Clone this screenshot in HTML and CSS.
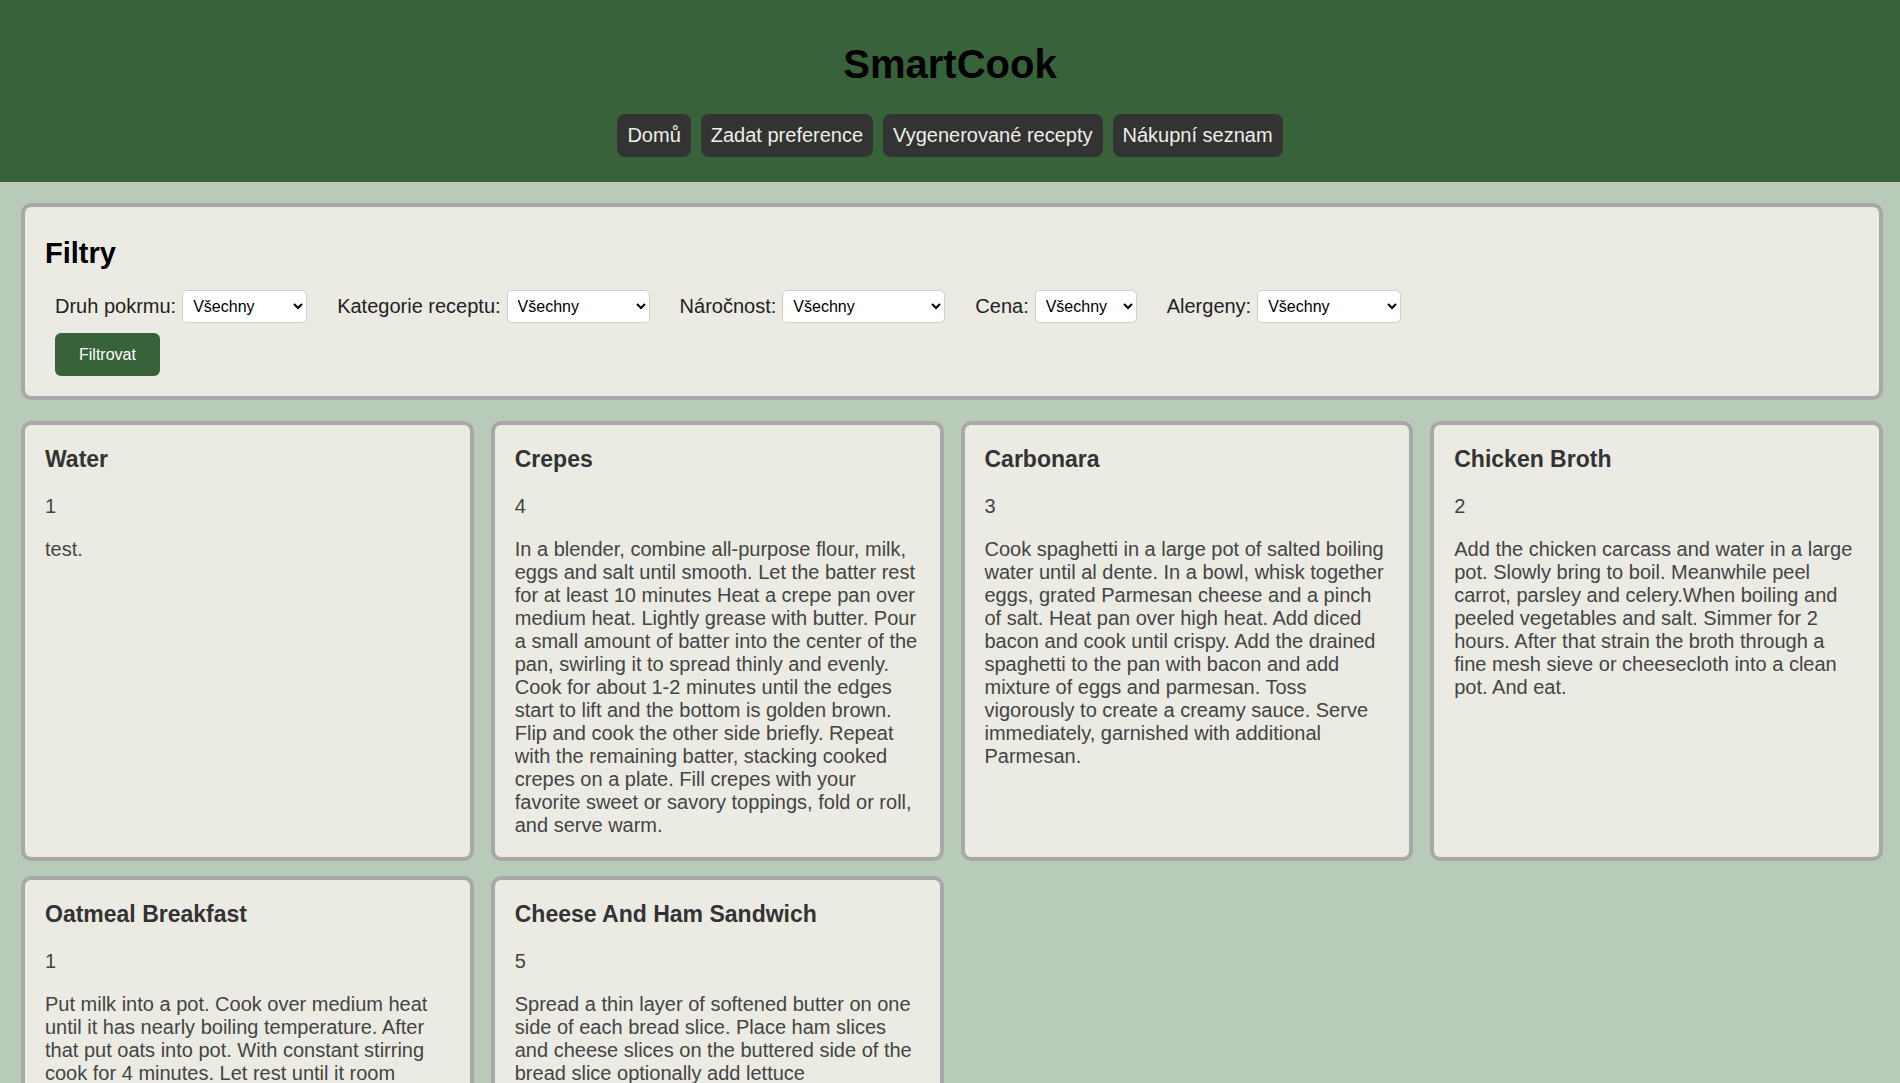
FILE: index.html
```html
<!DOCTYPE html>
<html lang="cs">
<head>
<meta charset="utf-8">
<title>SmartCook</title>
<link rel="stylesheet" href="styles.css">
</head>
<body>
<header class="site-header">
  <h1 class="brand">SmartCook</h1>
  <nav class="nav">
    <a class="nav-btn" href="#">Domů</a>
    <a class="nav-btn" href="#">Zadat preference</a>
    <a class="nav-btn" href="#">Vygenerované recepty</a>
    <a class="nav-btn" href="#">Nákupní seznam</a>
  </nav>
</header>
<main class="main">
  <section class="filters">
    <h2 class="filters-title">Filtry</h2>
    <form class="filter-form">
      <div class="filter-row">
        <label class="filter-group"><span class="filter-label">Druh pokrmu:</span>
          <select class="sel sel-druh"><option>Všechny</option></select></label>
        <label class="filter-group"><span class="filter-label">Kategorie receptu:</span>
          <select class="sel sel-kat"><option>Všechny</option></select></label>
        <label class="filter-group"><span class="filter-label">Náročnost:</span>
          <select class="sel sel-nar"><option>Všechny</option></select></label>
        <label class="filter-group"><span class="filter-label">Cena:</span>
          <select class="sel sel-cena"><option>Všechny</option></select></label>
        <label class="filter-group"><span class="filter-label">Alergeny:</span>
          <select class="sel sel-alg"><option>Všechny</option></select></label>
      </div>
      <button type="button" class="filter-btn">Filtrovat</button>
    </form>
  </section>
  <section class="cards">
    <article class="card">
      <h3 class="card-title">Water</h3>
      <p class="card-num">1</p>
      <p class="card-text">test.</p>
    </article>
    <article class="card">
      <h3 class="card-title">Crepes</h3>
      <p class="card-num">4</p>
      <p class="card-text">In a blender, combine all-purpose flour, milk, eggs and salt until smooth. Let the batter rest for at least 10 minutes Heat a crepe pan over medium heat. Lightly grease with butter. Pour a small amount of batter into the center of the pan, swirling it to spread thinly and evenly. Cook for about 1-2 minutes until the edges start to lift and the bottom is golden brown. Flip and cook the other side briefly. Repeat with the remaining batter, stacking cooked crepes on a plate. Fill crepes with your favorite sweet or savory toppings, fold or roll, and serve warm.</p>
    </article>
    <article class="card">
      <h3 class="card-title">Carbonara</h3>
      <p class="card-num">3</p>
      <p class="card-text">Cook spaghetti in a large pot of salted boiling water until al dente. In a bowl, whisk together eggs, grated Parmesan cheese and a pinch of salt. Heat pan over high heat. Add diced bacon and cook until crispy. Add the drained spaghetti to the pan with bacon and add mixture of eggs and parmesan. Toss vigorously to create a creamy sauce. Serve immediately, garnished with additional Parmesan.</p>
    </article>
    <article class="card">
      <h3 class="card-title">Chicken Broth</h3>
      <p class="card-num">2</p>
      <p class="card-text">Add the chicken carcass and water in a large pot. Slowly bring to boil. Meanwhile peel carrot, parsley and celery.When boiling and peeled vegetables and salt. Simmer for 2 hours. After that strain the broth through a fine mesh sieve or cheesecloth into a clean pot. And eat.</p>
    </article>
    <article class="card">
      <h3 class="card-title">Oatmeal Breakfast</h3>
      <p class="card-num">1</p>
      <p class="card-text">Put milk into a pot. Cook over medium heat until it has nearly boiling temperature. After that put oats into pot. With constant stirring cook for 4 minutes. Let rest until it room temperature and serve.</p>
    </article>
    <article class="card">
      <h3 class="card-title">Cheese And Ham Sandwich</h3>
      <p class="card-num">5</p>
      <p class="card-text">Spread a thin layer of softened butter on one side of each bread slice. Place ham slices and cheese slices on the buttered side of the bread slice optionally add lettuce tomato/cucumber. Top with the other bread slice.</p>
    </article>
  </section>
</main>
</body>
</html>
```

FILE: styles.css
```css
* { box-sizing: border-box; }

html, body {
  margin: 0;
  padding: 0;
}

body {
  font-family: "Liberation Sans", Arial, sans-serif;
  background: #b8cbb8;
  color: #333;
}

.site-header {
  background: #38633a;
  padding: 41px 0 25px;
  text-align: center;
}

.brand {
  margin: 0 0 27px;
  font-size: 40px;
  font-weight: bold;
  line-height: 46px;
  color: #000;
}

.nav {
  display: flex;
  justify-content: center;
  gap: 10px;
}

.nav-btn {
  display: inline-block;
  background: #333;
  color: #eeeee6;
  text-decoration: none;
  font-size: 20px;
  line-height: 23px;
  padding: 10px 10px;
  border-radius: 8px;
}

.main {
  padding: 21px 17px 0 21px;
}

.filters {
  background: #ebebe3;
  border: 4px solid #a8a8a8;
  border-radius: 10px;
  padding: 20px;
  margin-bottom: 21px;
}

.filters-title {
  margin: 10px 0 20px;
  font-size: 29px;
  line-height: 33px;
  font-weight: bold;
  color: #000;
}

.filter-form {
  padding-left: 10px;
  display: flex;
  flex-direction: column;
  align-items: flex-start;
}

.filter-row {
  display: flex;
  align-items: center;
  gap: 30px;
}

.filter-group {
  display: flex;
  align-items: center;
  gap: 6px;
}

.filter-label {
  font-size: 20px;
  color: #222;
}

.sel {
  height: 33px;
  font-family: "Liberation Sans", Arial, sans-serif;
  font-size: 16px;
  color: #000;
  background: #fff;
  border: 1px solid #cfcfcf;
  border-radius: 5px;
  padding: 0 4px 0 6px;
}

.sel-druh { width: 125px; }
.sel-kat { width: 143px; }
.sel-nar { width: 163px; }
.sel-cena { width: 102px; }
.sel-alg { width: 144px; }

.filter-btn {
  margin-top: 10px;
  background: #38633a;
  color: #fff;
  border: none;
  border-radius: 6px;
  font-family: "Liberation Sans", Arial, sans-serif;
  font-size: 16px;
  line-height: 19px;
  padding: 12px 24px;
}

.cards {
  display: grid;
  grid-template-columns: repeat(4, 1fr);
  gap: 15px 17px;
}

.card {
  background: #ebebe3;
  border: 4px solid #a8a8a8;
  border-radius: 10px;
  padding: 20px;
}

.card-title {
  margin: 0;
  font-size: 23px;
  line-height: 29px;
  font-weight: bold;
  color: #333;
}

.card-num {
  margin: 21px 0 0;
  font-size: 20px;
  line-height: 23px;
  color: #444;
}

.card-text {
  margin: 20px 0 0;
  font-size: 20px;
  line-height: 23px;
  color: #444;
}
```
